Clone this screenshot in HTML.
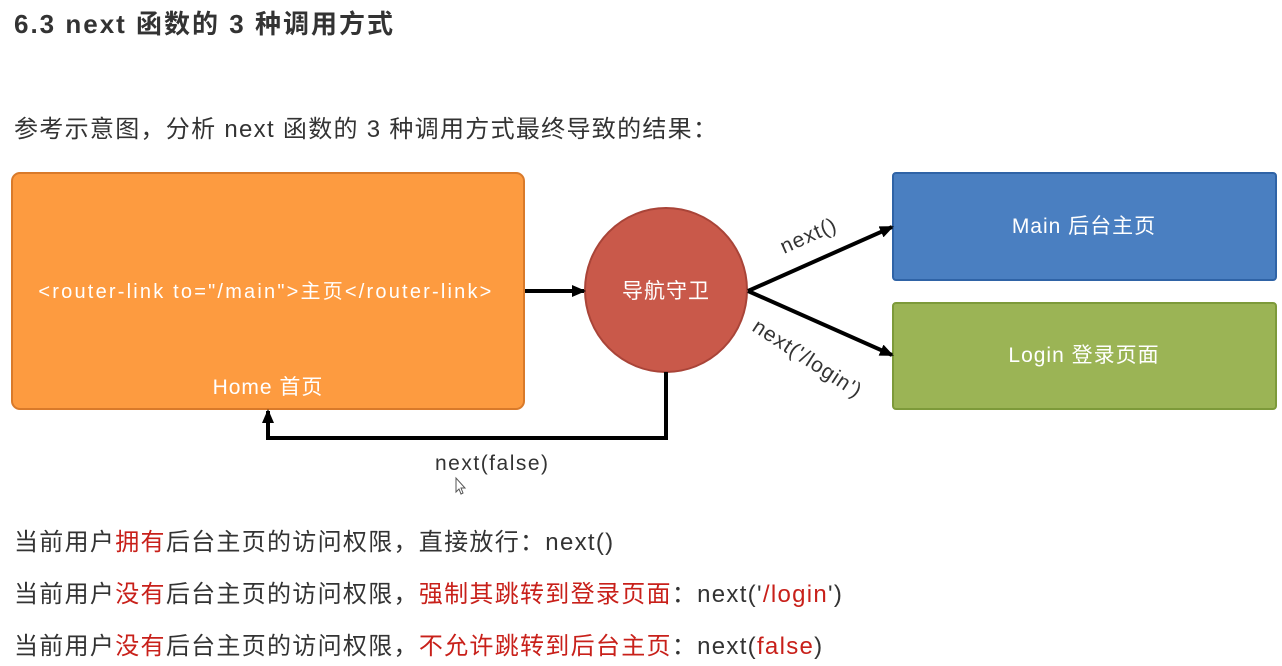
<!DOCTYPE html><html><head><meta charset="utf-8"><style>
body{margin:0;width:1282px;height:666px;background:#fff;overflow:hidden;font-family:"Liberation Sans","Noto Sans CJK SC",sans-serif;color:#333;position:relative}
.t{position:absolute;left:14px;top:4px;font-size:26px;font-weight:bold;color:#333;letter-spacing:2px}
.p{position:absolute;left:14px;font-size:24px;color:#333;white-space:nowrap;letter-spacing:1.3px}
.r{color:#c8201a}
svg{position:absolute;left:0;top:0}
</style></head><body>
<div class="t">6.3 next 函数的 3 种调用方式</div>
<div class="p" style="top:109px">参考示意图，分析 next 函数的 3 种调用方式最终导致的结果：</div>
<svg width="1282" height="666" font-family="Liberation Sans,Noto Sans CJK SC,sans-serif">
<defs><marker id="a" markerWidth="14" markerHeight="12" refX="12" refY="6" orient="auto" markerUnits="userSpaceOnUse"><path d="M0,0L14,6L0,12z" fill="#000"/></marker></defs>
<rect x="12" y="173" width="512" height="236" rx="8" fill="#fd9b40" stroke="#d97a2a" stroke-width="2"/>
<text x="266" y="298" font-size="20" letter-spacing="2.2" fill="#fff" text-anchor="middle">&lt;router-link to="/main"&gt;主页&lt;/router-link&gt;</text>
<text x="268" y="394" font-size="21" letter-spacing="1" fill="#fff" text-anchor="middle">Home 首页</text>
<ellipse cx="666" cy="290" rx="81" ry="82" fill="#c9594a" stroke="#a94438" stroke-width="2"/>
<text x="666" y="298" font-size="21" letter-spacing="1" fill="#fff" text-anchor="middle">导航守卫</text>
<rect x="893" y="173" width="383" height="107" rx="3" fill="#4a7fc1" stroke="#2f63a6" stroke-width="2"/>
<text x="1084" y="233" font-size="21" letter-spacing="1" fill="#fff" text-anchor="middle">Main 后台主页</text>
<rect x="893" y="303" width="383" height="106" rx="3" fill="#9bb455" stroke="#7d9a3a" stroke-width="2"/>
<text x="1084" y="362" font-size="21" letter-spacing="1" fill="#fff" text-anchor="middle">Login 登录页面</text>
<g stroke="#000" stroke-width="4" fill="none">
<line x1="525" y1="291" x2="584" y2="291" marker-end="url(#a)"/>
<line x1="748" y1="291" x2="892" y2="227" marker-end="url(#a)"/>
<line x1="748" y1="291" x2="892" y2="355" marker-end="url(#a)"/>
<polyline points="666,372 666,438 268,438 268,411" marker-end="url(#a)"/>
</g>
<text x="0" y="0" font-size="21" letter-spacing="1" fill="#333" transform="translate(784,254) rotate(-24)">next()</text>
<text x="0" y="0" font-size="21" letter-spacing="1" fill="#333" transform="translate(751,330) rotate(33)">next('/login')</text>
<text x="435" y="470" font-size="21" letter-spacing="1.5" fill="#333">next(false)</text>
<path d="M456,478v14l3,-3l2,5l2,-1l-2,-5h4z" fill="#fff" stroke="#555" stroke-width="1"/>
</svg>
<div class="p" style="top:522px">当前用户<span class="r">拥有</span>后台主页的访问权限，直接放行：next()</div>
<div class="p" style="top:574px">当前用户<span class="r">没有</span>后台主页的访问权限，<span class="r">强制其跳转到登录页面</span>：next('<span class="r">/login</span>')</div>
<div class="p" style="top:626px">当前用户<span class="r">没有</span>后台主页的访问权限，<span class="r">不允许跳转到后台主页</span>：next(<span class="r">false</span>)</div>
</body></html>
